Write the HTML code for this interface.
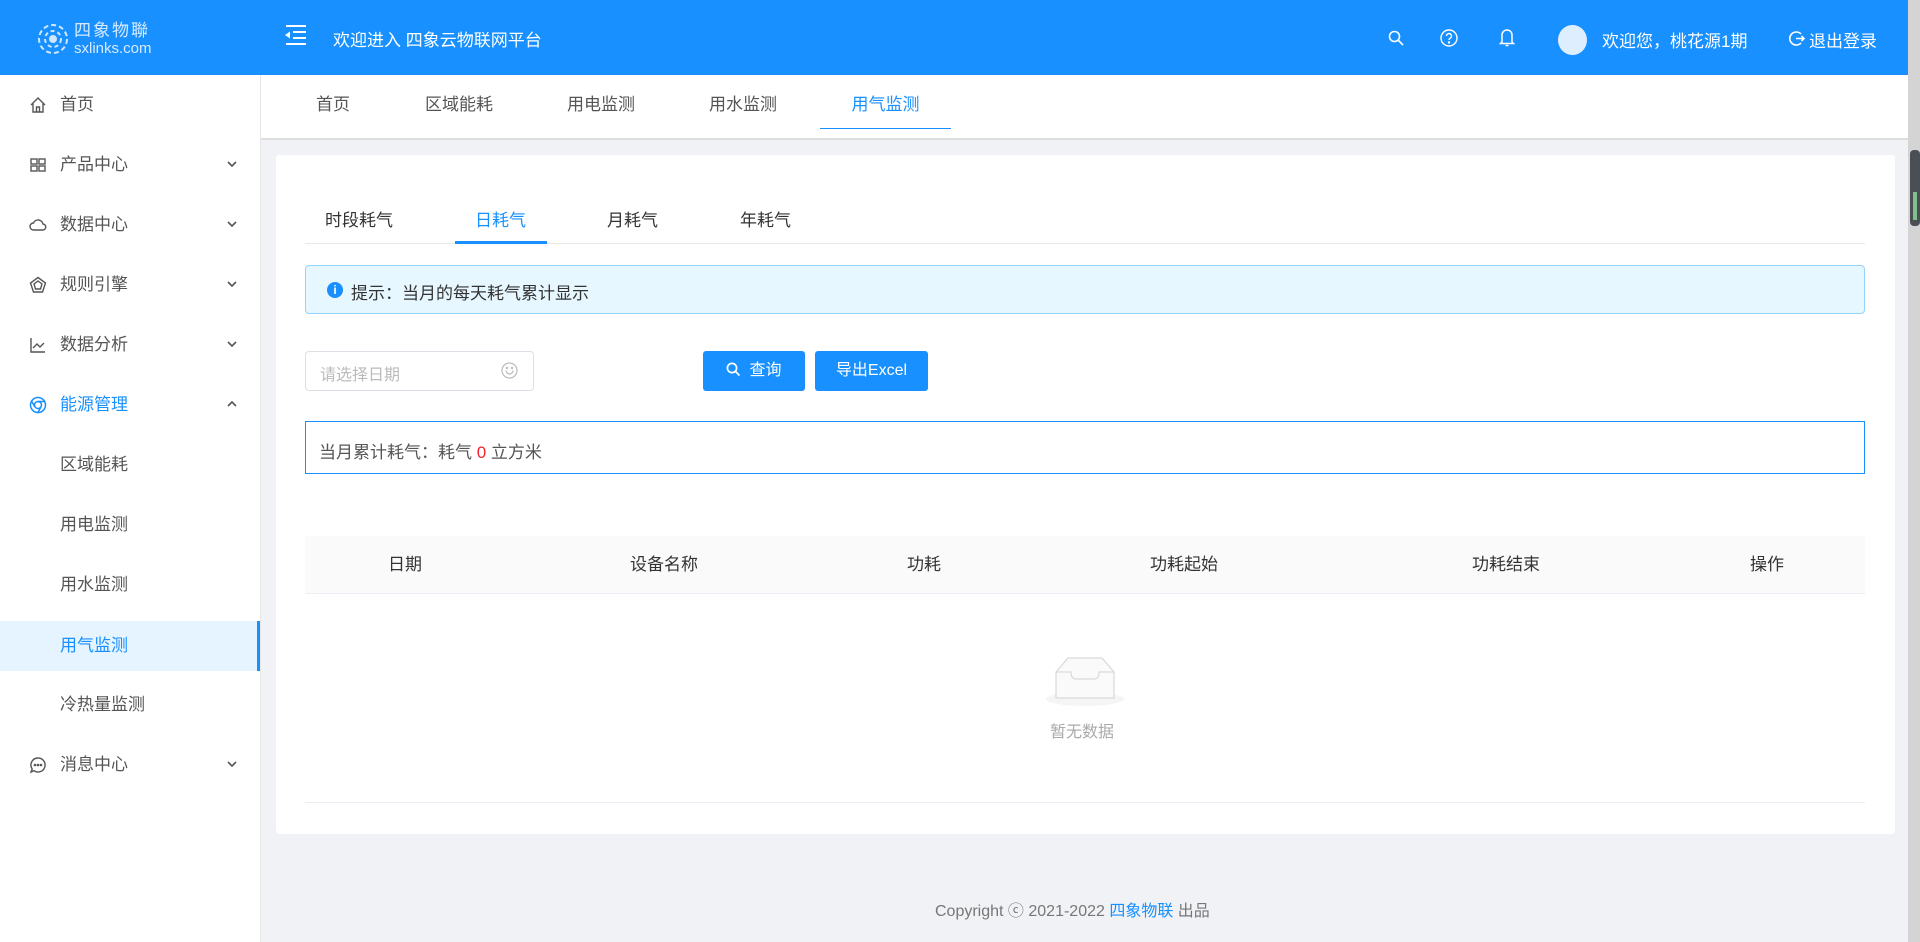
<!DOCTYPE html>
<html><head><meta charset="utf-8"><style>
*{box-sizing:border-box;margin:0;padding:0}
body{width:1920px;height:942px;overflow:hidden;background:#f0f2f5;font-family:"Liberation Sans","Noto Sans CJK SC",sans-serif;color:#555;font-size:17px;position:relative}
.abs{position:absolute}
.hdr{left:0;top:0;width:1908px;height:75px;background:#1890ff;color:#fff}
.side{left:0;top:75px;width:261px;height:867px;background:#fff;border-right:1px solid #e6e6e6}
.mi{position:absolute;left:0;width:260px;height:60px;line-height:60px;padding-left:60px;color:#555}
.mi svg.ic{position:absolute;left:29px;top:21px}
.mi .chev{position:absolute;left:226px;top:24px}
.sub{padding-left:60px}
.tabs{left:261px;top:75px;width:1647px;height:65px;background:#fff;border-bottom:2px solid #ddd}
.tb{position:absolute;top:0;line-height:60px;color:#555}
.card{left:276px;top:155px;width:1619px;height:679px;background:#fff;border-radius:3px}
.ct{position:absolute;text-align:center;color:#333;top:536px;line-height:58px}
.btn{position:absolute;top:351px;height:40px;background:#1890ff;color:#fff;border-radius:3px;line-height:40px;text-align:center;font-size:16px}
</style></head><body>
<div class="abs hdr">
  <svg class="abs" style="left:36px;top:22px" width="34" height="34" viewBox="0 0 34 34" fill="none" stroke="#cfe6ff" stroke-width="2"><circle cx="17" cy="17" r="14" stroke-dasharray="5 3"/><circle cx="17" cy="17" r="8" stroke-dasharray="4 3"/><circle cx="17" cy="17" r="3" fill="#cfe6ff"/></svg>
  <div class="abs" style="left:74px;top:22px;font-size:17px;color:#d6eaff;letter-spacing:2px;line-height:18px">四象物聯</div>
  <div class="abs" style="left:74px;top:41px;font-size:15px;color:#d6eaff;line-height:16px">sxlinks.com</div>
  <svg class="abs" style="left:284px;top:24px" width="22" height="22" viewBox="0 0 22 22" fill="#fff"><rect x="2" y="1" width="20" height="2"/><rect x="9" y="7" width="13" height="2"/><rect x="9" y="13" width="13" height="2"/><rect x="2" y="19" width="20" height="2"/><path d="M1 11 L6 7.5 L6 14.5Z"/></svg>
  <div class="abs" style="left:333px;top:26px;font-size:17px">欢迎进入 四象云物联网平台</div>
  <svg class="abs" style="left:1388px;top:30px" width="16" height="16" viewBox="0 0 16 16" fill="none" stroke="#fff" stroke-width="1.6"><circle cx="6.5" cy="6.5" r="5"/><path d="M10 10l5 5"/></svg>
  <svg class="abs" style="left:1440px;top:29px" width="18" height="18" viewBox="0 0 18 18" fill="none" stroke="#fff" stroke-width="1.4"><circle cx="9" cy="9" r="8"/><path d="M6.5 7a2.5 2.5 0 1 1 3.5 2.3c-.7.4-1 .9-1 1.7"/><circle cx="9" cy="13.5" r=".5" fill="#fff"/></svg>
  <svg class="abs" style="left:1499px;top:27px" width="16" height="21" viewBox="0 0 16 21" fill="none" stroke="#fff" stroke-width="1.5"><path d="M3 15V8a5 5 0 0 1 10 0v7l1.5 1.5h-13Z"/><path d="M6.5 18.5h3"/></svg>
  <div class="abs" style="left:1558px;top:25px;width:29px;height:30px;border-radius:50%;background:#deeeff"></div>
  <div class="abs" style="left:1602px;top:27px;font-size:17px">欢迎您，桃花源1期</div>
  <svg class="abs" style="left:1788px;top:30px" width="17" height="17" viewBox="0 0 17 17" fill="none" stroke="#fff" stroke-width="1.6"><path d="M13 4A6.5 6.5 0 1 0 13 13"/><path d="M8 8.5h8M13.5 6l2.5 2.5-2.5 2.5"/></svg>
  <div class="abs" style="left:1809px;top:27px;font-size:17px">退出登录</div>
</div>
<div class="abs" style="left:1908px;top:0;width:12px;height:942px;background:#d4d4d4"></div>
<div class="abs" style="left:1910px;top:150px;width:10px;height:76px;background:#4a4e55;border-radius:4px"></div>
<div class="abs" style="left:1913px;top:192px;width:4px;height:28px;background:#7fc08b"></div>

<div class="abs side">
  <div class="mi" style="top:0"><svg class="ic" width="18" height="18" viewBox="0 0 18 18" fill="none" stroke="#555" stroke-width="1.4"><path d="M2 9L9 2l7 7M4 7.5V16h10V7.5M7.5 16v-5h3v5"/></svg>首页</div>
  <div class="mi" style="top:60px"><svg class="ic" width="18" height="18" viewBox="0 0 18 18" fill="none" stroke="#555" stroke-width="1.4"><rect x="2" y="3" width="6" height="5"/><rect x="2" y="10" width="6" height="5"/><rect x="10" y="3" width="6" height="5"/><rect x="10" y="10" width="6" height="5"/></svg>产品中心<svg class="chev" width="12" height="10" viewBox="0 0 12 10" fill="none" stroke="#555" stroke-width="1.6"><path d="M2 3l4 4 4-4"/></svg></div>
  <div class="mi" style="top:120px"><svg class="ic" width="18" height="18" viewBox="0 0 18 18" fill="none" stroke="#555" stroke-width="1.4"><path d="M4.5 14h9a3 3 0 0 0 .5-6 5 5 0 0 0-9.5-1A3.5 3.5 0 0 0 4.5 14z"/></svg>数据中心<svg class="chev" width="12" height="10" viewBox="0 0 12 10" fill="none" stroke="#555" stroke-width="1.6"><path d="M2 3l4 4 4-4"/></svg></div>
  <div class="mi" style="top:180px"><svg class="ic" width="18" height="18" viewBox="0 0 18 18" fill="none" stroke="#555" stroke-width="1.4"><path d="M9 1.5l7.5 5.5-3 9h-9l-3-9z"/><path d="M9 5l4 3-1.5 5h-5L5 8z"/></svg>规则引擎<svg class="chev" width="12" height="10" viewBox="0 0 12 10" fill="none" stroke="#555" stroke-width="1.6"><path d="M2 3l4 4 4-4"/></svg></div>
  <div class="mi" style="top:240px"><svg class="ic" width="18" height="18" viewBox="0 0 18 18" fill="none" stroke="#555" stroke-width="1.4"><path d="M2 2v14h14M4 12l4-4 3 3 4-4"/></svg>数据分析<svg class="chev" width="12" height="10" viewBox="0 0 12 10" fill="none" stroke="#555" stroke-width="1.6"><path d="M2 3l4 4 4-4"/></svg></div>
  <div class="mi" style="top:300px;color:#1890ff"><svg class="ic" width="18" height="18" viewBox="0 0 18 18" fill="none" stroke="#1890ff" stroke-width="1.5"><circle cx="9" cy="9" r="7.5"/><circle cx="9" cy="9" r="3.5"/><path d="M9 5.5h7M6 11l-3.5-6M12 11l-3.5 6"/></svg>能源管理<svg class="chev" width="12" height="10" viewBox="0 0 12 10" fill="none" stroke="#555" stroke-width="1.6"><path d="M2 7l4-4 4 4"/></svg></div>
  <div class="mi" style="top:360px">区域能耗</div>
  <div class="mi" style="top:420px">用电监测</div>
  <div class="mi" style="top:480px">用水监测</div>
  <div class="mi" style="top:546px;height:50px;line-height:50px;background:#e6f4ff;color:#1890ff;border-right:3px solid #1890ff">用气监测</div>
  <div class="mi" style="top:600px">冷热量监测</div>
  <div class="mi" style="top:660px"><svg class="ic" width="18" height="18" viewBox="0 0 18 18" fill="none" stroke="#555" stroke-width="1.4"><path d="M9 2a7 7 0 1 1-4 12.7L2 16l1.2-3A7 7 0 0 1 9 2z"/><circle cx="6" cy="9" r=".6" fill="#555"/><circle cx="9" cy="9" r=".6" fill="#555"/><circle cx="12" cy="9" r=".6" fill="#555"/></svg>消息中心<svg class="chev" width="12" height="10" viewBox="0 0 12 10" fill="none" stroke="#555" stroke-width="1.6"><path d="M2 3l4 4 4-4"/></svg></div>
</div>

<div class="abs tabs">
  <div class="tb" style="left:55px">首页</div>
  <div class="tb" style="left:164px">区域能耗</div>
  <div class="tb" style="left:306px">用电监测</div>
  <div class="tb" style="left:448px">用水监测</div>
  <div class="tb" style="left:559px;width:131px;text-align:center;color:#1890ff;height:54px;border-bottom:1px solid #1890ff">用气监测</div>
</div>

<div class="abs card"></div>
<div class="abs" style="left:305px;top:243px;width:1560px;height:1px;background:#e8e8e8"></div>
<div class="abs" style="left:325px;top:206px;color:#333">时段耗气</div>
<div class="abs" style="left:475px;top:206px;color:#1890ff">日耗气</div>
<div class="abs" style="left:607px;top:206px;color:#333">月耗气</div>
<div class="abs" style="left:740px;top:206px;color:#333">年耗气</div>
<div class="abs" style="left:455px;top:241px;width:92px;height:3px;background:#1890ff"></div>

<div class="abs" style="left:305px;top:265px;width:1560px;height:49px;background:#e6f7ff;border:1px solid #91d5ff;border-radius:4px"></div>
<div class="abs" style="left:327px;top:282px;width:16px;height:16px;border-radius:50%;background:#1890ff;color:#fff;font-size:12px;line-height:16px;text-align:center;font-weight:bold">i</div>
<div class="abs" style="left:351px;top:279px;color:#333">提示：当月的每天耗气累计显示</div>

<div class="abs" style="left:305px;top:351px;width:229px;height:40px;border:1px solid #dcdfe6;border-radius:4px"></div>
<div class="abs" style="left:320px;top:361px;color:#bbb;font-size:16px">请选择日期</div>
<svg class="abs" style="left:501px;top:362px" width="17" height="17" viewBox="0 0 17 17" fill="none" stroke="#bbb" stroke-width="1.2"><circle cx="8.5" cy="8.5" r="7.5"/><path d="M5 8.5a3.5 3.5 0 0 0 7 0"/><circle cx="6" cy="6" r=".6"/><circle cx="11" cy="6" r=".6"/></svg>
<div class="btn" style="left:703px;width:102px"><svg style="vertical-align:-2px;margin-right:8px" width="15" height="15" viewBox="0 0 15 15" fill="none" stroke="#fff" stroke-width="1.7"><circle cx="6" cy="6" r="4.6"/><path d="M9.5 9.5l4 4"/></svg>查询</div>
<div class="btn" style="left:815px;width:113px">导出Excel</div>

<div class="abs" style="left:305px;top:421px;width:1560px;height:53px;border:1px solid #1890ff"></div>
<div class="abs" style="left:319px;top:438px;color:#555">当月累计耗气：耗气 <span style="color:#f5222d">0</span> 立方米</div>

<div class="abs" style="left:305px;top:536px;width:1560px;height:58px;background:#fafafa;border-bottom:1px solid #ebeef5"></div>
<div class="ct" style="left:355px;width:100px">日期</div>
<div class="ct" style="left:594px;width:140px">设备名称</div>
<div class="ct" style="left:874px;width:100px">功耗</div>
<div class="ct" style="left:1114px;width:140px">功耗起始</div>
<div class="ct" style="left:1436px;width:140px">功耗结束</div>
<div class="ct" style="left:1717px;width:100px">操作</div>
<svg class="abs" style="left:1044px;top:652px" width="82" height="56" viewBox="0 0 82 56"><ellipse cx="41" cy="47" rx="39" ry="7" fill="#f5f5f5"/><path d="M12 20L24 6h34l12 14v26H12z" fill="#fafafa" stroke="#d9d9d9" stroke-width="1.2"/><path d="M12 20h15c0 5 2 7 5 7h18c3 0 5-2 5-7h15" fill="none" stroke="#d9d9d9" stroke-width="1.2"/></svg>
<div class="abs" style="left:1050px;top:718px;color:#aaa;font-size:16px">暂无数据</div>
<div class="abs" style="left:305px;top:802px;width:1560px;height:1px;background:#ebeef5"></div>

<div class="abs" style="left:935px;top:897px;color:#777;font-size:16px">Copyright ⓒ 2021-2022 <span style="color:#1890ff">四象物联</span> 出品</div>
</body></html>
